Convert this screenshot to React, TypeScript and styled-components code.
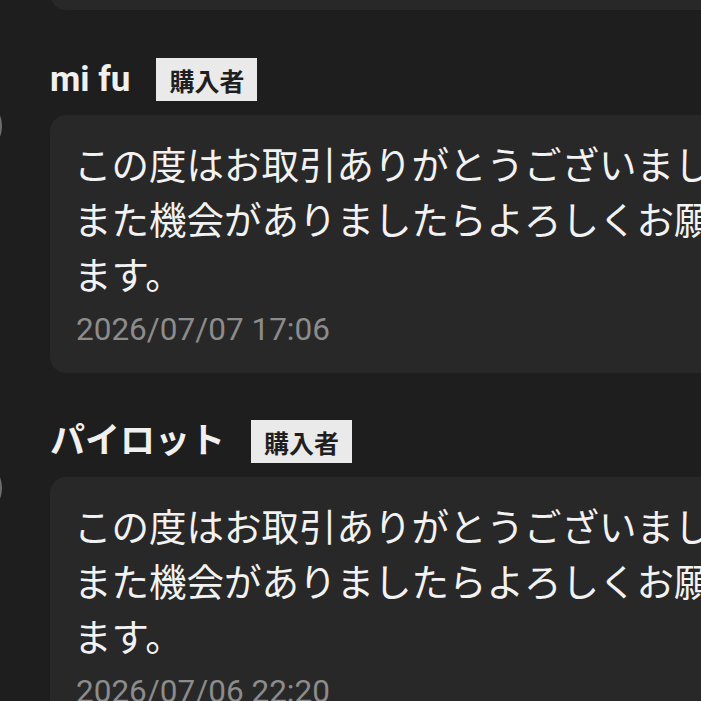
import styled, {createGlobalStyle} from 'styled-components';

const Global = createGlobalStyle`
  html, body {
    margin: 0;
    padding: 0;
    background: #1e1e1e;
    overflow: hidden;
  }
  body {
    font-family: Roboto, "Noto Sans CJK JP", sans-serif;
    color: #f1f1f1;
  }
`;

const Page = styled.div`
  width: 701px;
  height: 701px;
  overflow: hidden;
  background: #1e1e1e;
`;

const PrevCard = styled.div`
  margin: -30px 0 48px 50px;
  width: 800px;
  height: 40px;
  border-radius: 16px;
  background: #282828;
`;

const Item = styled.div`
  display: flex;
  gap: 48px;
  margin-bottom: 47px;
`;

const Avatar = styled.div`
  flex: none;
  width: 56px;
  height: 56px;
  margin-left: -54px;
  margin-top: 40px;
  border-radius: 50%;
  border: 2px solid #6e6e6e;
  background: #2a2a2a;
  box-sizing: border-box;
`;

const Body = styled.div`
  flex: none;
  width: 800px;
`;

const Head = styled.div`
  display: flex;
  align-items: center;
  gap: 26px;
  height: 43px;
  margin-bottom: 14px;
`;

const Name = styled.div`
  font-size: 35px;
  font-weight: 700;
  color: #f0f0f0;
  line-height: 1;
`;

const Badge = styled.span`
  display: inline-flex;
  align-items: center;
  height: 43px;
  padding: 0 13px;
  background: #eaeaea;
  color: #1f1f1f;
  font-size: 25px;
  font-weight: 700;
  font-family: "Noto Sans CJK JP", sans-serif;
  box-sizing: border-box;
`;

const Card = styled.div`
  background: #282828;
  border-radius: 16px;
  padding: 20px 27px 23px 26px;
`;

const Message = styled.p`
  margin: 0 0 0 -2px;
  font-family: "Noto Sans CJK JP", sans-serif;
  font-size: 37.5px;
  line-height: 55px;
  color: #f2f2f2;
`;

const Date = styled.div`
  margin-top: 10px;
  font-family: Roboto, sans-serif;
  font-size: 31.5px;
  line-height: 40px;
  color: #8c8c8c;
`;

const reviews = [
  {name: 'mi fu', date: '2026/07/07 17:06'},
  {name: 'パイロット', date: '2026/07/06 22:20'},
];

const text = 'この度はお取引ありがとうございました。また機会がありましたらよろしくお願いします。';

export default function App() {
  return (
    <Page>
      <Global/>
      <PrevCard/>
      {reviews.map(r => (
        <Item key={r.date}>
          <Avatar/>
          <Body>
            <Head>
              <Name>{r.name}</Name>
              <Badge>購入者</Badge>
            </Head>
            <Card>
              <Message>{text}</Message>
              <Date>{r.date}</Date>
            </Card>
          </Body>
        </Item>
      ))}
    </Page>
  );
}
